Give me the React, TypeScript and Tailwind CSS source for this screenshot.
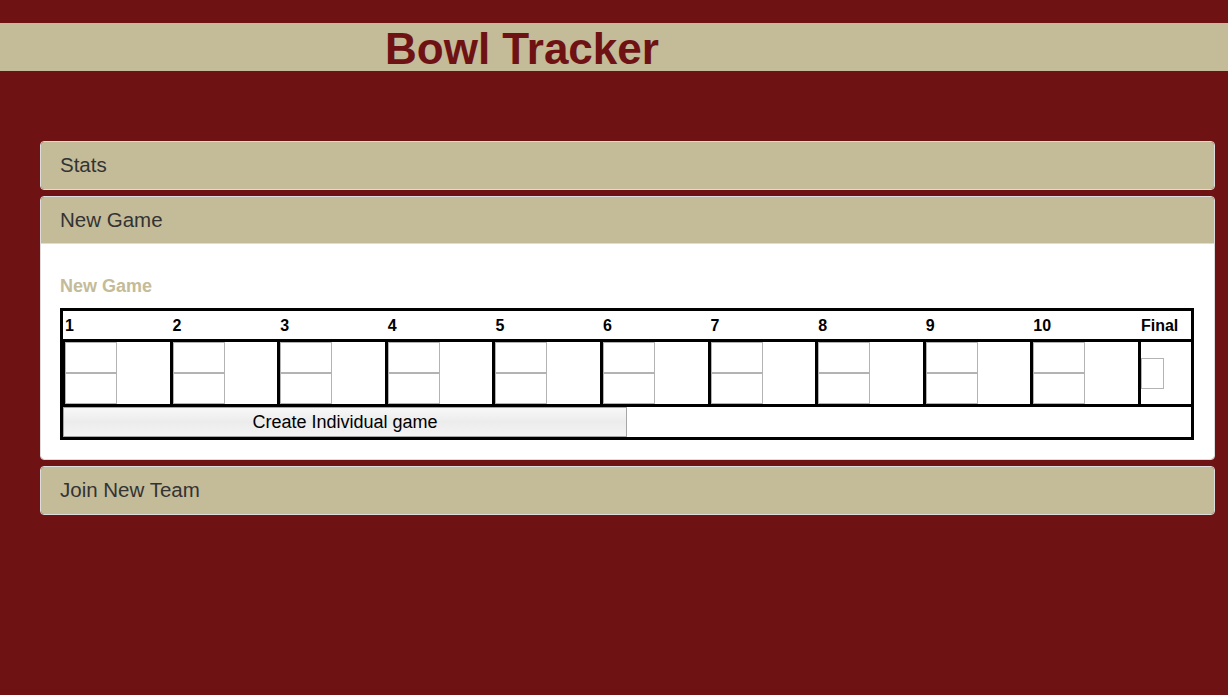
import React from "react";

const FONT = { fontFamily: '"Liberation Sans", Arial, Helvetica, sans-serif' };

function Panel({ title, children }: { title: string; children?: React.ReactNode }) {
  return (
    <div className="rounded-[4px] border border-[#dcdcdc] overflow-hidden">
      <div className={`h-[47px] flex items-center pl-[19px] bg-[#c4bb98] text-[#333333] text-[20.5px] ${children ? "border-b border-[#dcdcdc] pt-[1px]" : ""}`}>
        {title}
      </div>
      {children}
    </div>
  );
}

function FrameCell({ first }: { first?: boolean }) {
  return (
    <div className={`flex-1 min-w-0 h-[62px] border-r-[3px] border-black ${first ? "border-l-[2px]" : ""}`}>
      <div className="w-[52px] flex flex-col">
        <div className="h-[31px] border border-[#b3b3b3] bg-white" />
        <div className="h-[31px] border border-[#b3b3b3] bg-white" />
      </div>
    </div>
  );
}

export default function App() {
  const frames = ["1", "2", "3", "4", "5", "6", "7", "8", "9", "10"];
  return (
    <div className="min-h-[695px] bg-[#6e1214] pt-[23px]" style={FONT}>
      <div className="h-[48px] bg-[#c4bb98] flex items-center pl-[385px] pt-[3px]">
        <span className="text-[44px] font-bold leading-none text-[#6e1214]">Bowl Tracker</span>
      </div>

      <div className="ml-[40px] mr-[13px] mt-[70px] flex flex-col gap-[6px]">
        <Panel title="Stats" />
        <Panel title="New Game">
          <div className="bg-white pt-[32px] pb-[19px] pl-[19px] pr-[20px]">
            <div className="text-[18px] font-bold text-[#c4bb98] leading-[21px] mb-[11px]">New Game</div>
            <div className="border-[3px] border-black">
              <div className="flex h-[27px] items-center border-b-[3px] border-black box-content pt-[1px]">
                {frames.map((f, i) => (
                  <div key={f} className={`flex-1 min-w-0 text-[16px] font-bold text-black ${i === 0 ? "pl-[2px]" : ""}`}>
                    {f}
                  </div>
                ))}
                <div className="w-[50px] text-[16px] font-bold text-black">Final</div>
              </div>
              <div className="flex border-b-[3px] border-black">
                {frames.map((f, i) => (
                  <FrameCell key={f} first={i === 0} />
                ))}
                <div className="w-[50px] h-[62px] flex items-center">
                  <div className="w-[23px] h-[31px] border border-[#b3b3b3]" />
                </div>
              </div>
              <div className="h-[30px] flex">
                <button className="w-1/2 h-[30px] border border-[#a6a6a6] bg-gradient-to-b from-[#f8f8f8] via-[#ececec] to-[#f3f3f3] text-[18px] text-black leading-none">
                  Create Individual game
                </button>
              </div>
            </div>
          </div>
        </Panel>
        <Panel title="Join New Team" />
      </div>
    </div>
  );
}
